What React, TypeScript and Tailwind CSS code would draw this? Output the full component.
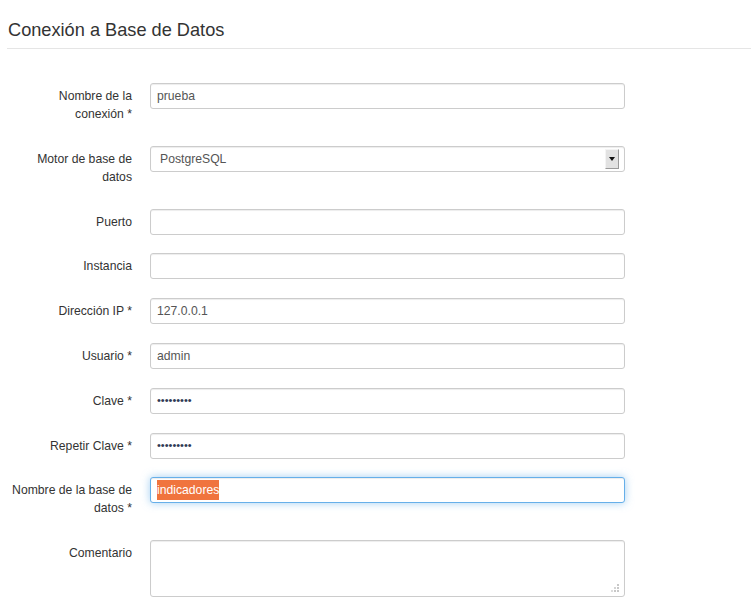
import { ReactNode } from 'react';

interface RowProps {
  label: ReactNode;
  children: ReactNode;
}

const Row = ({ label, children }: RowProps) => (
  <div className="flex items-start">
    <label className="w-[121px] shrink-0 pt-[4px] pb-[4px] text-right leading-[18px] text-[#333]">
      {label}
    </label>
    <div className="ml-[18px] w-[475px] shrink-0">{children}</div>
  </div>
);

const inputBase =
  'block h-[26px] w-full rounded-[3px] border border-[#ccc] bg-white px-[6px] text-[12.2px] text-[#555] shadow-[inset_0_1px_1px_rgba(0,0,0,0.075)] outline-none';

const TextInput = ({ value = '' }: { value?: string }) => (
  <input type="text" readOnly value={value} className={inputBase} />
);

const PasswordInput = () => (
  <div className={`${inputBase} flex items-center`}>
    <span className="text-[11px] leading-none text-[#2f3a55]">•••••••••</span>
  </div>
);

// old-style native select look
const SelectBox = ({ value }: { value: string }) => (
  <div className={`${inputBase} relative flex items-center pl-[9px]`}>
    <span>{value}</span>
    <div className="absolute right-[5px] top-[2px] flex h-[20px] w-[14px] items-center justify-center border border-t-[#f4f4f4] border-l-[#f4f4f4] border-r-[#9a9a9a] border-b-[#9a9a9a] bg-[#e2e2e2]">
      <svg width="6" height="4" viewBox="0 0 6 4">
        <path d="M0 0h6L3 4z" fill="#111" />
      </svg>
    </div>
  </div>
);

const FocusedInput = ({ value }: { value: string }) => (
  <div className="flex h-[26px] w-full items-center rounded-[3px] border border-[#66afe9] bg-white px-[6px] text-[12.2px] shadow-[inset_0_1px_1px_rgba(0,0,0,0.075),0_0_8px_rgba(102,175,233,0.6)]">
    <span className="inline-block bg-[#f0743e] leading-[20px] text-white">{value}</span>
  </div>
);

const TextArea = () => (
  <div className="relative h-[57px] w-full rounded-[3px] border border-[#ccc] bg-white shadow-[inset_0_1px_1px_rgba(0,0,0,0.075)]">
    {/* resize grip */}
    <svg className="absolute bottom-[4px] right-[5px]" width="9" height="9" viewBox="0 0 9 9">
      <rect x="7" y="1" width="2" height="2" fill="#c8c8c8" />
      <rect x="7" y="4" width="2" height="2" fill="#c8c8c8" />
      <rect x="7" y="7" width="2" height="2" fill="#c8c8c8" />
      <rect x="4" y="4" width="2" height="2" fill="#d4d4d4" />
      <rect x="4" y="7" width="2" height="2" fill="#c8c8c8" />
      <rect x="1" y="7" width="2" height="2" fill="#dcdcdc" />
    </svg>
  </div>
);

export default function App() {
  return (
    <div className="min-h-screen bg-white font-['Liberation_Sans',Arial,sans-serif] text-[12.2px] text-[#333]">
      <div className="pl-[7px]">
        <h3 className="border-b border-[#e5e5e5] pb-[8px] pl-[1px] pt-[20px] text-[18.2px] font-normal leading-[20px] text-[#333]">
          Conexión a Base de Datos
        </h3>
      </div>

      <form className="flex flex-col gap-[18.8px] pl-[11px] pt-[34px]">
        <Row label="Nombre de la conexión *">
          <TextInput value="prueba" />
        </Row>
        <Row label="Motor de base de datos">
          <SelectBox value="PostgreSQL" />
        </Row>
        <Row label="Puerto">
          <TextInput />
        </Row>
        <Row label="Instancia">
          <TextInput />
        </Row>
        <Row label="Dirección IP *">
          <TextInput value="127.0.0.1" />
        </Row>
        <Row label="Usuario *">
          <TextInput value="admin" />
        </Row>
        <Row label="Clave *">
          <PasswordInput />
        </Row>
        <Row label="Repetir Clave *">
          <PasswordInput />
        </Row>
        <Row label="Nombre de la base de datos *">
          <FocusedInput value="indicadores" />
        </Row>
        <Row label="Comentario">
          <TextArea />
        </Row>
      </form>
    </div>
  );
}
